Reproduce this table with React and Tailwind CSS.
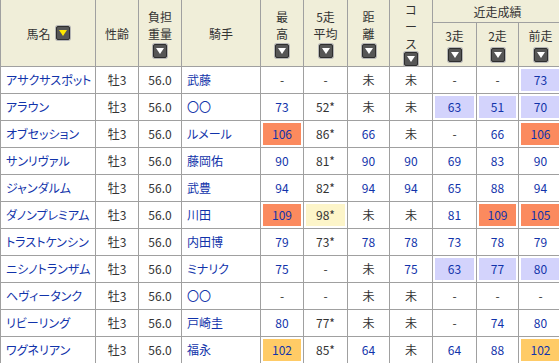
import React from 'react';

const BG = {
    o: 'bg-[#fb8a5e]',
    b: 'bg-[#d3d3fc]',
    y: 'bg-[#fdf5c9]',
    g: 'bg-[#ffcb66]',
};

const rows = [
    ['アサクサスポット', '武藤', ['-'], ['-'], ['未'], ['未'], ['-'], ['-'], ['73', 'b']],
    ['アラウン', '〇〇', ['73'], ['52*'], ['未'], ['未'], ['63', 'b'], ['51', 'b'], ['70', 'b']],
    ['オブセッション', 'ルメール', ['106', 'o'], ['86*'], ['66'], ['未'], ['-'], ['66'], ['106', 'o']],
    ['サンリヴァル', '藤岡佑', ['90'], ['81*'], ['90'], ['90'], ['69'], ['83'], ['90']],
    ['ジャンダルム', '武豊', ['94'], ['82*'], ['94'], ['94'], ['65'], ['88'], ['94']],
    ['ダノンプレミアム', '川田', ['109', 'o'], ['98*', 'y'], ['未'], ['未'], ['81'], ['109', 'o'], ['105', 'o']],
    ['トラストケンシン', '内田博', ['79'], ['73*'], ['78'], ['78'], ['73'], ['78'], ['79']],
    ['ニシノトランザム', 'ミナリク', ['75'], ['-'], ['未'], ['75'], ['63', 'b'], ['77', 'b'], ['80', 'b']],
    ['ヘヴィータンク', '〇〇', ['-'], ['-'], ['未'], ['未'], ['-'], ['-'], ['-']],
    ['リビーリング', '戸崎圭', ['80'], ['77*'], ['未'], ['未'], ['-'], ['74'], ['80']],
    ['ワグネリアン', '福永', ['102', 'g'], ['85*'], ['64'], ['未'], ['64'], ['88'], ['102', 'g']],
];

function Sort({ yellow }) {
    return (
        <span className="inline-flex h-[14px] w-[14px] items-center justify-center rounded-[2px] border border-[#2e2e2e] bg-[#565656] shadow-[0_0_0_1px_#b5b5b5]">
            <svg width="8" height="6" viewBox="0 0 8 6">
                <path d="M0 0H8L4 6Z" fill={yellow ? '#ffe800' : '#ffffff'} />
            </svg>
        </span>
    );
}

const cell = 'border-r border-b border-[#a0a0a0]';
const head = `${cell} bg-[#f0eed9] flex flex-col items-center justify-center text-[#333] leading-[17px]`;

function Score({ v }) {
    const [text, hl] = v;
    const blue = /^\d+$/.test(text);
    return (
        <div className={`${cell} p-[2px] flex`}>
            <div className={`flex-1 flex items-center justify-center ${hl ? BG[hl] : ''} ${blue ? 'text-[#1133aa]' : 'text-[#333]'}`}>
                {text}
            </div>
        </div>
    );
}

export default function App() {
    return (
        <div className="w-[559px] h-[363px] overflow-hidden bg-white">
            <div
                className="w-[564px] border-l border-[#a0a0a0] grid grid-cols-[95px_43px_43px_79px_43px_44px_42px_43px_44px_42px_44px] grid-rows-[23px_44px] auto-rows-[27px] text-[12px] [font-feature-settings:'palt']"
                style={{ fontFamily: '"Noto Sans CJK JP", "Liberation Sans", sans-serif' }}
            >
                <div className={`${head} row-span-2 !flex-row gap-[5px]`}>
                    <span>馬名</span>
                    <Sort yellow />
                </div>
                <div className={`${head} row-span-2`}>性齢</div>
                <div className={`${head} row-span-2`}>
                    <span>負担</span>
                    <span>重量</span>
                    <span className="mt-[2px] flex"><Sort /></span>
                </div>
                <div className={`${head} row-span-2`}>騎手</div>
                <div className={`${head} row-span-2`}>
                    <span>最</span>
                    <span>高</span>
                    <span className="mt-[2px] flex"><Sort /></span>
                </div>
                <div className={`${head} row-span-2`}>
                    <span>5走</span>
                    <span>平均</span>
                    <span className="mt-[2px] flex"><Sort /></span>
                </div>
                <div className={`${head} row-span-2`}>
                    <span>距</span>
                    <span>離</span>
                    <span className="mt-[2px] flex"><Sort /></span>
                </div>
                <div className={`${head} row-span-2`}>
                    <span>コ</span>
                    <span>ー</span>
                    <span>ス</span>
                    <span className="flex"><Sort /></span>
                </div>
                <div className={`${head} col-span-3`}>近走成績</div>
                {['3走', '2走', '前走'].map((t) => (
                    <div key={t} className={head}>
                        <span>{t}</span>
                        <span className="mt-[4px] flex"><Sort /></span>
                    </div>
                ))}

                {rows.map((r) => (
                    <React.Fragment key={r[0]}>
                        <div className={`${cell} flex items-center pl-[5px] text-[#1133aa] whitespace-nowrap`}>{r[0]}</div>
                        <div className={`${cell} flex items-center justify-center text-[#333]`}>牡3</div>
                        <div className={`${cell} flex items-center justify-center text-[#333]`}>56.0</div>
                        <div className={`${cell} flex items-center pl-[5px] text-[#1133aa]`}>{r[1]}</div>
                        {r.slice(2).map((v, i) => (
                            <Score key={i} v={v} />
                        ))}
                    </React.Fragment>
                ))}
            </div>
        </div>
    );
}
